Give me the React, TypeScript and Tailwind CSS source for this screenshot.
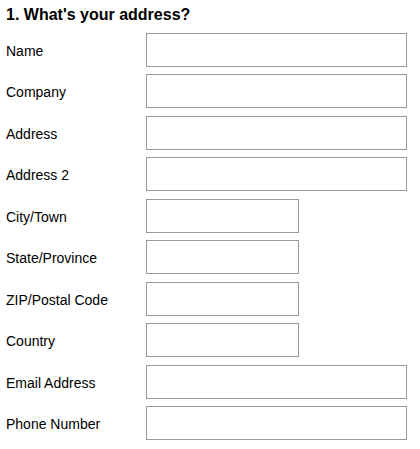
import React from "react";

const fields: { label: string; short?: boolean }[] = [
  { label: "Name" },
  { label: "Company" },
  { label: "Address" },
  { label: "Address 2" },
  { label: "City/Town", short: true },
  { label: "State/Province", short: true },
  { label: "ZIP/Postal Code", short: true },
  { label: "Country", short: true },
  { label: "Email Address" },
  { label: "Phone Number" },
];

export default function App() {
  return (
    <div className="w-[420px] h-[449px] bg-white text-black" style={{ fontFamily: '"Liberation Sans", Arial, sans-serif' }}>
      <h1 className="pl-[6px] pt-[5px] text-[16px] font-bold leading-[19px]">1. What's your address?</h1>
      <div className="mt-[9px] flex flex-col gap-y-[7.45px]">
        {fields.map((f) => (
          <div key={f.label} className="flex items-center">
            <label className="w-[146px] pl-[6px] text-[14px] pt-[3px]">{f.label}</label>
            <input
              type="text"
              className={`h-[34px] border border-[#999999] bg-white outline-none ${f.short ? "w-[153px]" : "w-[261px]"}`}
            />
          </div>
        ))}
      </div>
    </div>
  );
}
